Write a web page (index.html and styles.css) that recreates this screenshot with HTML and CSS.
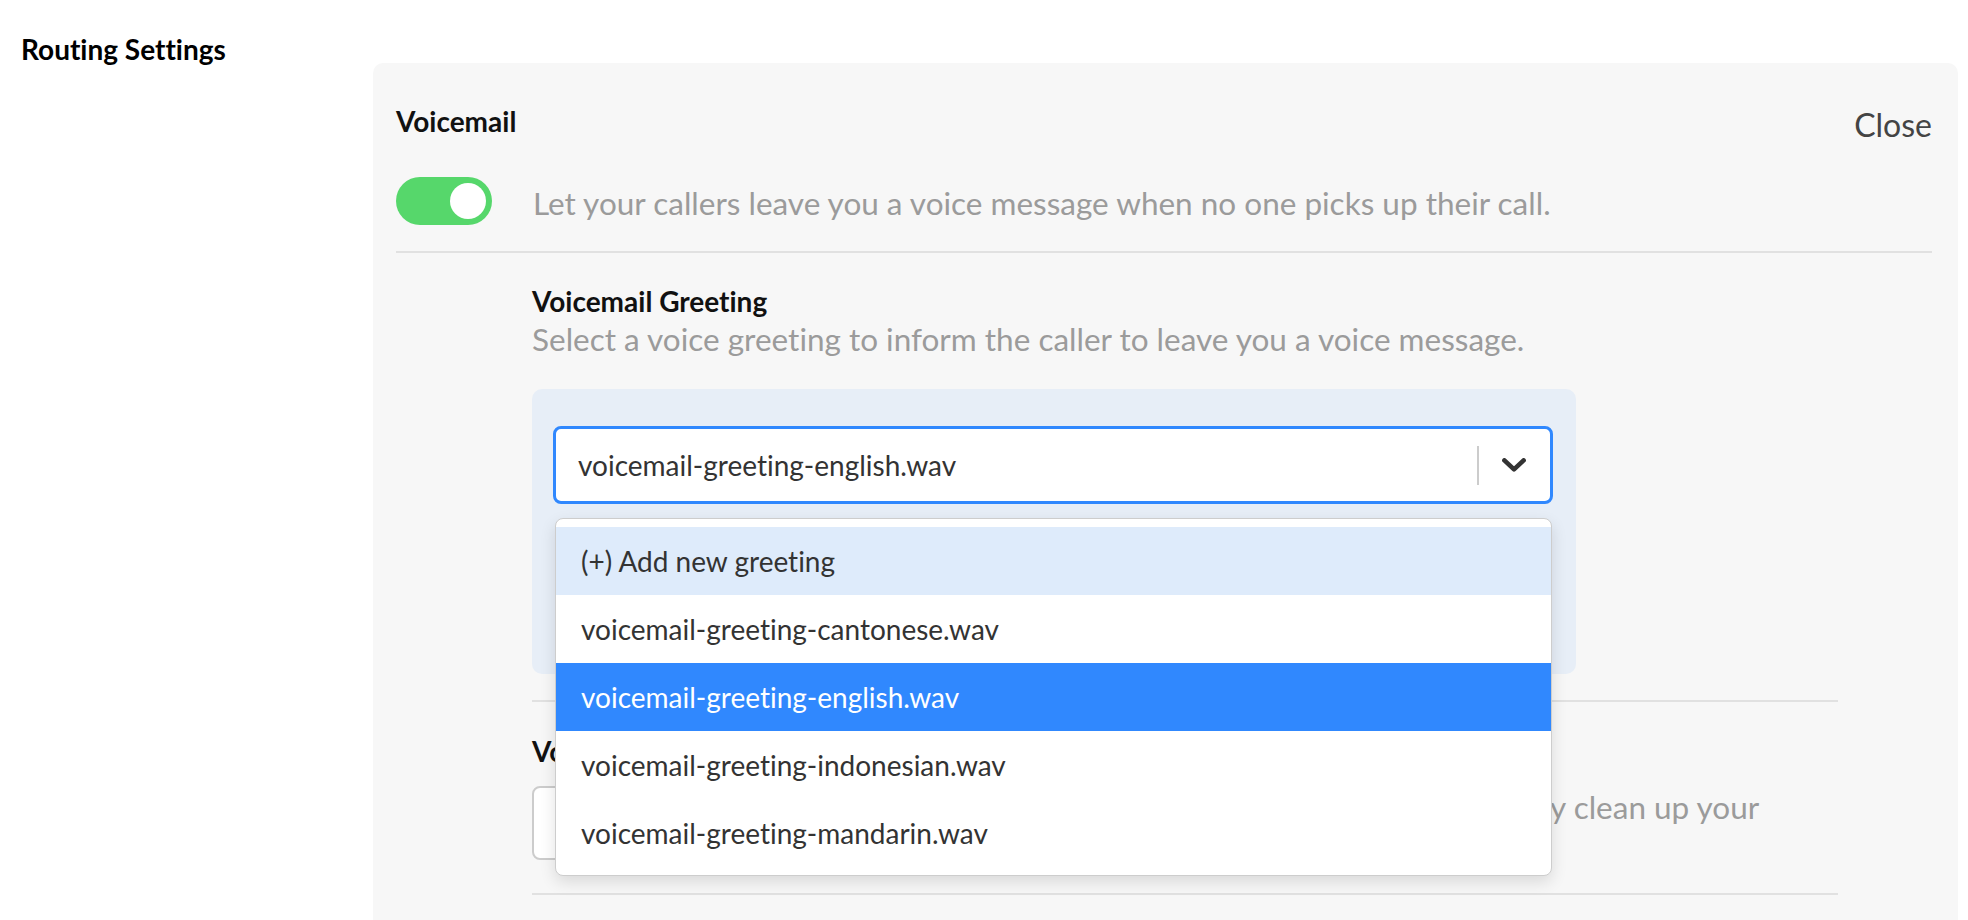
FILE: index.html
```html
<!DOCTYPE html>
<html lang="en">
<head>
<meta charset="utf-8">
<title>Routing Settings</title>
<link rel="stylesheet" href="styles.css">
</head>
<body>
<div class="page">
  <aside class="side">
    <h2 class="side-title">Routing Settings</h2>
  </aside>
  <section class="panel">
    <header class="panel-head">
      <h3 class="panel-title">Voicemail</h3>
      <button class="close" type="button">Close</button>
    </header>
    <div class="toggle-row">
      <span class="toggle"><span class="knob"></span></span>
      <p class="desc">Let your callers leave you a voice message when no one picks up their call.</p>
    </div>
    <div class="rule rule-top"></div>
    <div class="sub">
      <div class="field field-greeting">
        <h4 class="field-title">Voicemail Greeting</h4>
        <p class="desc field-desc">Select a voice greeting to inform the caller to leave you a voice message.</p>
        <div class="greet-box">
          <div class="select-wrap">
            <div class="select">
              <span class="select-value option-text">voicemail-greeting-english.wav</span>
              <span class="select-sep"></span>
              <span class="select-arrow">
                <svg width="24" height="14" viewBox="0 0 24 14"><path d="M2.4 2.4 L12 11.4 L21.6 2.4" fill="none" stroke="#333" stroke-width="4.6" stroke-linecap="round" stroke-linejoin="round"/></svg>
              </span>
            </div>
            <ul class="menu">
              <li class="option-text hover">(+) Add new greeting</li>
              <li class="option-text">voicemail-greeting-cantonese.wav</li>
              <li class="option-text active">voicemail-greeting-english.wav</li>
              <li class="option-text">voicemail-greeting-indonesian.wav</li>
              <li class="option-text">voicemail-greeting-mandarin.wav</li>
            </ul>
          </div>
        </div>
      </div>
      <div class="rule rule-mid"></div>
      <div class="field field-retention">
        <h4 class="field-title">Voicemail Retention</h4>
        <div class="retention">
          <div class="input"></div>
          <p class="desc">Days to keep voicemails. After this, we will automatically clean up your voicemails.</p>
        </div>
      </div>
      <div class="rule rule-bottom"></div>
    </div>
  </section>
</div>
</body>
</html>
```

FILE: styles.css
```css
* {
  box-sizing: border-box;
}

body {
  margin: 0;
  font-family: Lato, "Noto Sans", sans-serif;
  font-variant-ligatures: no-common-ligatures;
  background: #ffffff;
  color: #111111;
  overflow: hidden;
}

.page {
  display: flex;
  align-items: flex-start;
}

.side {
  width: 373px;
  flex: none;
  padding: 32px 0 0 21px;
}

.side-title {
  margin: 0;
  font-size: 28px;
  line-height: 34px;
  font-weight: 700;
  color: #000000;
}

.panel {
  flex: 1;
  margin: 63px 10px 0 0;
  min-height: 900px;
  background: #f7f7f7;
  border-radius: 10px 10px 0 0;
  padding: 41px 26px 60px 23px;
}

.panel-head {
  display: flex;
  justify-content: space-between;
  align-items: flex-start;
}

.panel-title {
  margin: 0;
  font-size: 28px;
  line-height: 34px;
  font-weight: 700;
  color: #111111;
}

.close {
  margin: 2px 0 0 0;
  padding: 0;
  border: 0;
  background: none;
  font-family: Lato, "Noto Sans", sans-serif;
  font-variant-ligatures: no-common-ligatures;
  font-size: 32px;
  line-height: 38px;
  color: #444444;
}

.toggle-row {
  display: flex;
  align-items: center;
  gap: 41px;
  margin-top: 33px;
}

.toggle {
  flex: none;
  display: flex;
  justify-content: flex-end;
  align-items: center;
  width: 96px;
  height: 48px;
  padding: 0 6px;
  border-radius: 24px;
  background: #56d76b;
}

.knob {
  width: 36px;
  height: 36px;
  border-radius: 50%;
  background: #ffffff;
}

.desc {
  margin: 0;
  font-size: 31.5px;
  line-height: 38px;
  color: #9b9b9b;
}

.toggle-row .desc {
  margin-top: 3px;
}

.rule {
  height: 2px;
  background: #e1e1e1;
}

.rule-top {
  margin-top: 26px;
}

.sub {
  margin: 0 94px 0 136px;
}

.field-title {
  margin: 0;
  font-size: 28px;
  line-height: 34px;
  font-weight: 700;
  color: #111111;
}

.field-greeting {
  padding-top: 31px;
}

.field-desc {
  margin-top: 2px;
}

.greet-box {
  width: 1044px;
  margin-top: 31px;
  padding: 37px 23px 170px 21px;
  border-radius: 10px;
  background: #e7eef7;
}

.select-wrap {
  position: relative;
}

.select {
  display: flex;
  align-items: center;
  height: 78px;
  padding-left: 22px;
  border: 3px solid #3088fe;
  border-radius: 8px;
  background: #ffffff;
}

.option-text {
  font-size: 28px;
  color: #333333;
  white-space: nowrap;
}

.select-value {
  flex: 1;
  line-height: 34px;
}

.select-sep {
  width: 2px;
  height: 39px;
  background: #cccccc;
}

.select-arrow {
  display: flex;
  padding: 0 24px 0 23px;
}

.menu {
  position: absolute;
  top: calc(100% + 14px);
  left: 2px;
  right: 1px;
  z-index: 2;
  margin: 0;
  padding: 8px 0;
  list-style: none;
  background: #ffffff;
  border: 1px solid #cdcdcd;
  border-radius: 8px;
  box-shadow: 0 6px 16px rgba(0, 0, 0, 0.12);
}

.menu li {
  height: 68px;
  padding-left: 25px;
  line-height: 68px;
}

.menu li.hover {
  background: #deebfb;
}

.menu li.active {
  background: #3088fe;
  color: #ffffff;
}

.rule-mid {
  margin-top: 26px;
}

.field-retention {
  padding-top: 32px;
}

.retention {
  display: flex;
  align-items: flex-start;
  gap: 24px;
  margin-top: 18px;
}

.input {
  flex: none;
  width: 235px;
  height: 74px;
  border: 2px solid #cccccc;
  border-radius: 8px;
  background: #ffffff;
}

.retention .desc {
  flex: 1;
  margin-top: 2px;
}

.rule-bottom {
  margin-top: 29px;
}
```
